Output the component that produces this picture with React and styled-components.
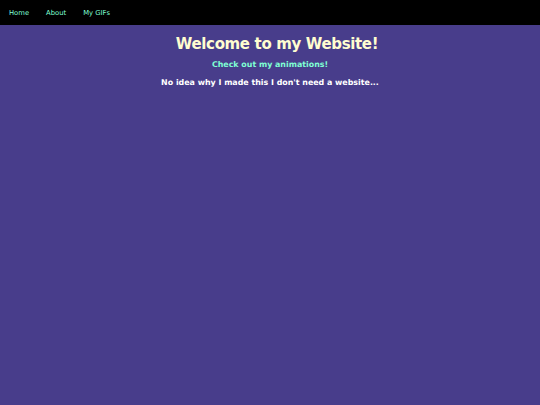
import React from "react";
import styled, { createGlobalStyle } from "styled-components";

const Global = createGlobalStyle`
  html, body { margin: 0; padding: 0; background: #483d8b; height: 100%; }
  body { font-family: "DejaVu Sans", Verdana, sans-serif; }
`;

const Nav = styled.nav`
  background: #000;
  height: 25px;
  display: flex;
  align-items: center;
  padding-left: 9px;
  gap: 17px;
`;

const NavLink = styled.a`
  color: #7fffd4;
  font-size: 6.8px;
  text-decoration: none;
`;

const Main = styled.main`
  display: flex;
  flex-direction: column;
  align-items: center;
  padding-top: 10px;
`;

const Title = styled.h1`
  margin: 0;
  padding-left: 14px;
  color: #fffdd0;
  font-size: 15px;
  letter-spacing: -0.35px;
  font-weight: bold;
`;

const Sub = styled.a`
  margin-top: 7px;
  color: #7fffd4;
  font-size: 7.9px;
  font-weight: bold;
  text-decoration: none;
`;

const Para = styled.p`
  margin: 8.5px 0 0;
  color: #fff;
  font-size: 7.9px;
  font-weight: bold;
`;

export default function App() {
  return (
    <>
      <Global />
      <Nav>
        <NavLink href="#">Home</NavLink>
        <NavLink href="#">About</NavLink>
        <NavLink href="#">My GIFs</NavLink>
      </Nav>
      <Main>
        <Title>Welcome to my Website!</Title>
        <Sub href="#">Check out my animations!</Sub>
        <Para>No idea why I made this I don't need a website...</Para>
      </Main>
    </>
  );
}
